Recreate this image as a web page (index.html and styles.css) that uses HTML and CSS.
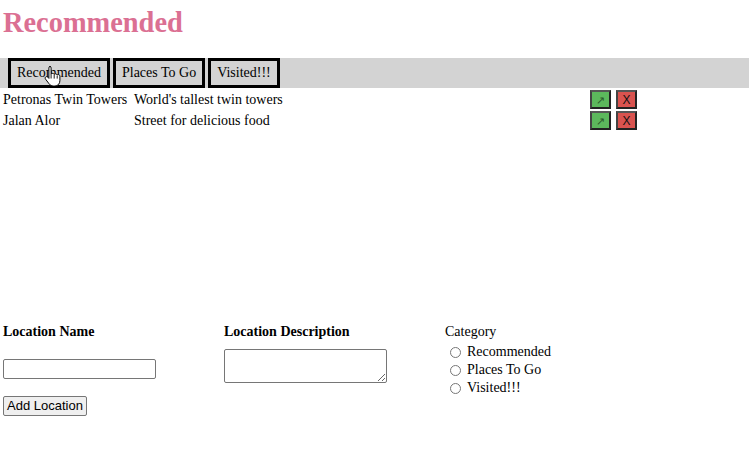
FILE: index.html
```html
<!DOCTYPE html>
<html>
<head>
<meta charset="utf-8">
<title>Recommended</title>
<link rel="stylesheet" href="styles.css">
</head>
<body>
<h1 class="title">Recommended</h1>
<nav class="tabs">
  <button class="tab">Recommended</button>
  <button class="tab">Places To Go</button>
  <button class="tab">Visited!!!</button>
  <svg class="cursor" width="17" height="22" viewBox="0 0 17 22">
    <path d="M5.5 1.5c1 0 1.6.7 1.6 1.6v6.2c.3-.6.9-.9 1.5-.9.8 0 1.4.5 1.6 1.1.3-.4.8-.7 1.4-.7.8 0 1.4.5 1.6 1.2.3-.3.7-.4 1.1-.4 1 0 1.6.8 1.6 1.7v4.4c0 2.9-2 5.3-5 5.3H9.2c-1.8 0-3-.8-4.1-2.2l-3.5-4.6c-.6-.8-.5-1.8.2-2.3.7-.5 1.6-.3 2.2.4l.9 1.1V3.1c0-.9.6-1.6 1.6-1.6z" fill="#fff" stroke="#000" stroke-width="1"/>
    <path d="M7.1 9.5v4M10.2 10v3.6M13.2 10.6v3" stroke="#000" stroke-width="0.9"/>
  </svg>
</nav>
<section class="list">
  <div class="row">
    <span class="name">Petronas Twin Towers</span>
    <span class="desc">World's tallest twin towers</span>
    <span class="actions"><button class="act go">↗</button><button class="act del">X</button></span>
  </div>
  <div class="row">
    <span class="name">Jalan Alor</span>
    <span class="desc">Street for delicious food</span>
    <span class="actions"><button class="act go">↗</button><button class="act del">X</button></span>
  </div>
</section>
<form class="add-form">
  <div class="field">
    <div class="label bold">Location Name</div>
    <input class="text-input" type="text">
    <button class="add-btn" type="button">Add Location</button>
  </div>
  <div class="field">
    <div class="label bold">Location Description</div>
    <textarea class="text-area"></textarea>
  </div>
  <div class="field">
    <div class="label">Category</div>
    <div class="radio-group">
      <div class="radio-line"><input type="radio" name="cat" class="radio">Recommended</div>
      <div class="radio-line"><input type="radio" name="cat" class="radio">Places To Go</div>
      <div class="radio-line"><input type="radio" name="cat" class="radio">Visited!!!</div>
    </div>
  </div>
</form>
</body>
</html>
```
FILE: styles.css
```css
html, body {
  margin: 0;
  padding: 0;
  background: #fff;
}
body {
  font-family: "Liberation Serif", "Times New Roman", serif;
  font-size: 14px;
  color: #000;
}
.title {
  color: #db7093;
  font-size: 28.4px;
  font-weight: bold;
  margin: 7px 3px 19px;
  line-height: 32px;
}
.tabs {
  position: relative;
  display: flex;
  gap: 3px;
  height: 30px;
  padding-left: 8px;
  background: #d3d3d3;
}
.tab {
  height: 30px;
  box-sizing: border-box;
  border: 3px solid #000;
  background: #d3d3d3;
  font-family: "Liberation Serif", "Times New Roman", serif;
  font-size: 14px;
  color: #000;
  padding: 0 6px;
  margin: 0;
}
.cursor {
  position: absolute;
  left: 44px;
  top: 7px;
}
.list {
  height: 236px;
  padding: 2px 0 0 3px;
  box-sizing: border-box;
}
.row {
  display: grid;
  grid-template-columns: 131px 456px auto;
  height: 19px;
  align-items: center;
  margin-bottom: 2px;
  line-height: 16px;
}
.actions {
  display: flex;
  gap: 5px;
}
.act {
  width: 21px;
  height: 19px;
  box-sizing: border-box;
  border: 2px solid #222;
  border-top-color: #555;
  border-left-color: #444;
  padding: 0;
  margin: 0;
  font-family: "Liberation Sans", Arial, sans-serif;
  font-size: 12px;
  line-height: 14px;
  color: #111;
}
.go {
  background: #5cb85c;
  color: #2d5a2d;
  font-size: 11px;
}
.del {
  background: #d9534f;
}
.add-form {
  display: grid;
  grid-template-columns: 221px 221px 221px;
  padding-left: 3px;
}
.label {
  line-height: 16px;
  height: 16px;
}
.bold {
  font-weight: bold;
}
.field {
  display: flex;
  flex-direction: column;
  align-items: flex-start;
}
.text-input {
  width: 153px;
  height: 20px;
  box-sizing: border-box;
  margin: 19px 0 0;
  border: 1px solid #767676;
  border-radius: 2px;
  padding: 1px 2px;
}
.add-btn {
  margin-top: 17px;
  height: 20px;
  box-sizing: border-box;
  padding: 0 3px;
  white-space: nowrap;
  font-family: "Liberation Sans", Arial, sans-serif;
  font-size: 13px;
  line-height: 16px;
  background: #efefef;
  border: 1px solid #767676;
  border-radius: 2px;
  color: #000;
}
.text-area {
  width: 163px;
  height: 34px;
  box-sizing: border-box;
  margin-top: 9px;
  border: 1px solid #767676;
  border-radius: 2px;
  resize: both;
}
.radio-group {
  padding-top: 3px;
}
.radio-line {
  line-height: 18px;
  height: 18px;
  display: flex;
  align-items: center;
}
.radio {
  width: 11px;
  height: 11px;
  margin: 0 6px 0 5px;
}
```
